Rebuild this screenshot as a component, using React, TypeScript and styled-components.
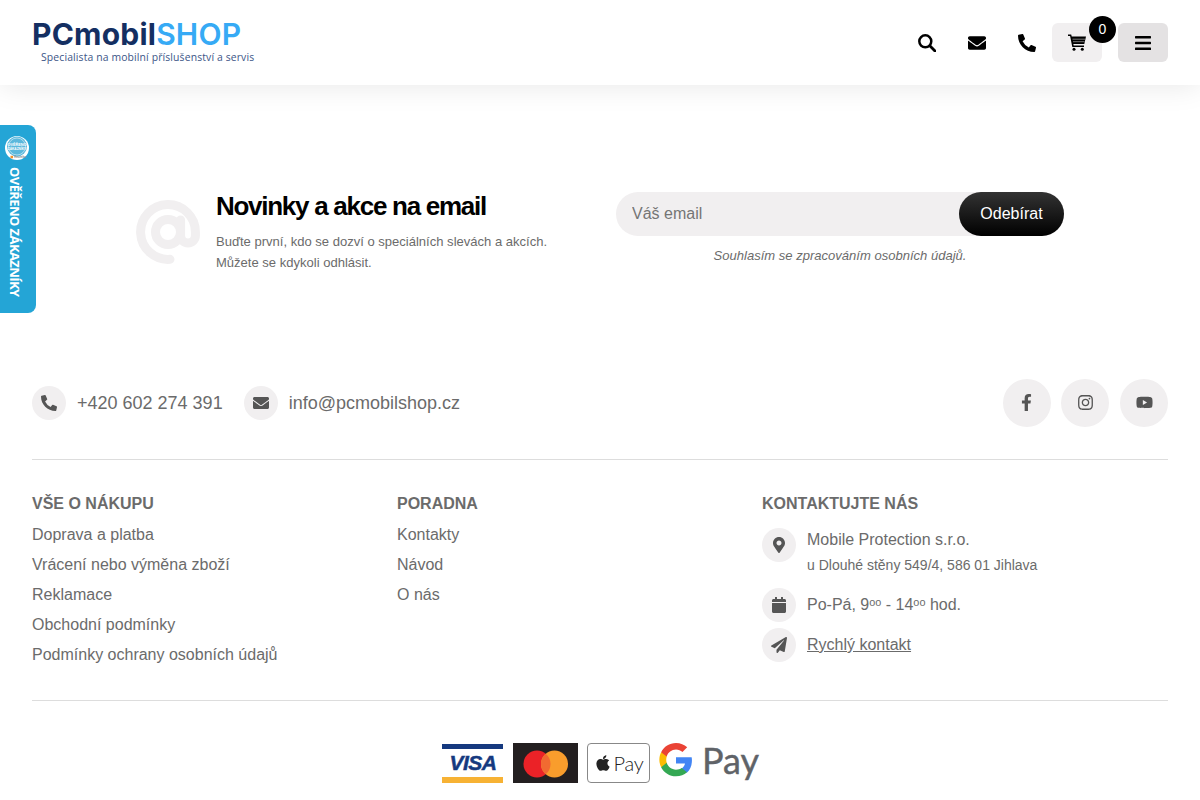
import { ReactNode } from "react";
import styled, { createGlobalStyle } from "styled-components";
import {
  FaApple,
  FaCalendar,
  FaEnvelope,
  FaFacebookF,
  FaInstagram,
  FaMapMarkerAlt,
  FaPaperPlane,
  FaPhoneAlt,
  FaYoutube,
} from "react-icons/fa";

const GlobalStyle = createGlobalStyle`
  html, body {
    margin: 0;
    padding: 0;
    background: #fff;
    overflow: hidden;
    height: 800px;
  }
  body {
    font-family: "Liberation Sans", Arial, sans-serif;
    color: #6b6b6b;
  }
`;

const shopLinks = [
  "Doprava a platba",
  "Vrácení nebo výměna zboží",
  "Reklamace",
  "Obchodní podmínky",
  "Podmínky ochrany osobních údajů",
];

const helpLinks = ["Kontakty", "Návod", "O nás"];

const App = () => {
  return (
    <Page>
      <GlobalStyle />
      <Header>
        <Logo>
          <LogoName>
            PCmobil<LogoAccent>SHOP</LogoAccent>
          </LogoName>
          <LogoTagline>Specialista na mobilní příslušenství a servis</LogoTagline>
        </Logo>
        <Toolbar>
          <ToolButton>
            <svg width="18" height="18" viewBox="0 0 18 18" fill="none" stroke="#000">
              <circle cx="7.3" cy="7.3" r="6" strokeWidth="2.5" />
              <path d="M11.8 11.8L17 17" strokeWidth="2.8" strokeLinecap="round" />
            </svg>
          </ToolButton>
          <ToolButton>
            <FaEnvelope />
          </ToolButton>
          <ToolButton>
            <FaPhoneAlt />
          </ToolButton>
          <ToolButton $bg="#f1eff0">
            <svg width="18" height="17" viewBox="0 0 18 17">
              <path d="M0 .6h3.200l.5 2H18l-1.700 7.400H5.300l.4 1.600H16V13H4.300L2.100 2H0z" fill="#000" />
              <path d="M4.500 5.200h12.500M5 7.700h11.500" stroke="#f1eff0" strokeWidth=".5" />
              <circle cx="6" cy="15.300" r="1.500" fill="#000" />
              <circle cx="14.300" cy="15.300" r="1.500" fill="#000" />
            </svg>
            <CartBadge>0</CartBadge>
          </ToolButton>
          <MenuButton $bg="#e4e2e3">
            <svg width="16" height="14" viewBox="0 0 16 14" fill="#000">
              <rect width="16" height="2.400" rx=".6" />
              <rect y="5.800" width="16" height="2.400" rx=".6" />
              <rect y="11.600" width="16" height="2.400" rx=".6" />
            </svg>
          </MenuButton>
        </Toolbar>
      </Header>

      <TrustBadge>
        <TrustSeal>
          <svg width="24" height="24" viewBox="0 0 24 24" fontFamily="Liberation Sans" fontWeight="700">
            <circle cx="12" cy="12" r="12" fill="#fff" />
            <circle cx="12" cy="10.500" r="10" fill="#5bb8dc" />
            <circle cx="12" cy="10.500" r="8.500" fill="none" stroke="#fff" strokeWidth=".5" />
            <text x="12" y="10" textAnchor="middle" fontSize="3.800" fill="#fff">
              OVĚŘENO
            </text>
            <text x="12" y="14" textAnchor="middle" fontSize="3.200" fill="#fff">
              ZÁKAZNÍKY
            </text>
            <rect x="5.500" y="19.800" width="2.500" height="2.500" fill="#f3902c" />
            <text x="9" y="22.200" fontSize="3" fill="#7f8a90">
              Heureka
            </text>
          </svg>
        </TrustSeal>
        <TrustLabel>OVĚŘENO ZÁKAZNÍKY</TrustLabel>
      </TrustBadge>

      <Newsletter>
        <NewsletterInfo>
          <AtIcon width="64" height="64" viewBox="0 0 64 64" fill="none" stroke="#f1eff0" strokeWidth="9" strokeLinecap="round">
            <circle cx="32" cy="32" r="12.500" />
            <path d="M34 59.300A27.400 27.400 0 1 1 59.400 32v3.500a7.400 7.400 0 0 1-14.800 0V20" />
          </AtIcon>
          <div>
            <NewsletterTitle>Novinky a akce na email</NewsletterTitle>
            <NewsletterText>
              Buďte první, kdo se dozví o speciálních slevách a akcích.
              <br />
              Můžete se kdykoli odhlásit.
            </NewsletterText>
          </div>
        </NewsletterInfo>
        <NewsletterForm>
          <EmailField>
            <EmailInput placeholder="Váš email" />
            <SubscribeButton>Odebírat</SubscribeButton>
          </EmailField>
          <Consent>Souhlasím se zpracováním osobních údajů.</Consent>
        </NewsletterForm>
      </Newsletter>

      <Footer>
        <ContactBar>
          <ContactList>
            <ContactItem>
              <Round>
                <FaPhoneAlt />
              </Round>
              <ContactText>+420 602 274 391</ContactText>
            </ContactItem>
            <ContactItem>
              <Round>
                <FaEnvelope />
              </Round>
              <ContactText>info@pcmobilshop.cz</ContactText>
            </ContactItem>
          </ContactList>
          <Socials>
            <SocialLink>
              <FaFacebookF />
            </SocialLink>
            <SocialLink>
              <FaInstagram />
            </SocialLink>
            <SocialLink>
              <FaYoutube />
            </SocialLink>
          </Socials>
        </ContactBar>

        <Columns>
          <LinkColumn title="VŠE O NÁKUPU" links={shopLinks} />
          <LinkColumn title="PORADNA" links={helpLinks} />
          <div>
            <ColumnTitle>KONTAKTUJTE NÁS</ColumnTitle>
            <AddressRow>
              <Round>
                <FaMapMarkerAlt />
              </Round>
              <div>
                <AddressName>Mobile Protection s.r.o.</AddressName>
                <AddressLine>u Dlouhé stěny 549/4, 586 01 Jihlava</AddressLine>
              </div>
            </AddressRow>
            <InfoRow>
              <Round>
                <FaCalendar />
              </Round>
              <span>Po-Pá, 9ᵒᵒ - 14ᵒᵒ hod.</span>
            </InfoRow>
            <InfoRow>
              <Round>
                <FaPaperPlane />
              </Round>
              <QuickLink>Rychlý kontakt</QuickLink>
            </InfoRow>
          </div>
        </Columns>

        <Payments>
          <svg width="61" height="40" viewBox="0 0 61 40">
            <rect y="1" width="61" height="5" fill="#15397f" />
            <rect y="34" width="61" height="6" fill="#f7b234" />
            <text
              x="31"
              y="27"
              textAnchor="middle"
              fontFamily="Liberation Sans"
              fontSize="21"
              fontWeight="700"
              fontStyle="italic"
              letterSpacing="-.5"
              fill="#15397f"
              stroke="#15397f"
              strokeWidth=".5"
            >
              VISA
            </text>
          </svg>
          <svg width="65" height="40" viewBox="0 0 65 40">
            <rect width="65" height="40" fill="#231f20" />
            <circle cx="24" cy="21" r="13.500" fill="#eb2227" />
            <circle cx="41.500" cy="21" r="13.500" fill="#f99d2c" />
            <path d="M32.750 10.700a13.500 13.500 0 0 1 0 20.600a13.500 13.500 0 0 1 0-20.600z" fill="#f16a31" />
          </svg>
          <ApplePay>
            <FaApple />
            <ApplePayLabel>Pay</ApplePayLabel>
          </ApplePay>
          <GooglePay>
            <svg width="34" height="34" viewBox="0 0 48 48">
              <path fill="#4285f4" d="M46.500 24.500c0-1.600-.14-3.100-.4-4.500H24v8.800h12.700c-.55 2.900-2.200 5.400-4.700 7.100v5.900h7.600c4.400-4.100 6.900-10.100 6.900-17.300z" />
              <path fill="#34a853" d="M24 47c6.300 0 11.600-2.100 15.500-5.700L32 35.400c-2.100 1.400-4.800 2.300-8 2.300-6.100 0-11.300-4.100-13.100-9.700H3v6.100C6.900 41.800 14.800 47 24 47z" />
              <path fill="#fbbc04" d="M10.900 28c-.5-1.400-.7-2.900-.7-4.500s.3-3.100.7-4.500v-6.100H3C1.400 16.100.5 19.700.5 23.500S1.400 30.900 3 34.100l7.900-6.100z" />
              <path fill="#ea4335" d="M24 9.300c3.500 0 6.600 1.200 9.100 3.500l6.700-6.700C35.600 2.300 30.300 0 24 0 14.800 0 6.900 5.200 3 12.900l7.900 6.100C12.700 13.400 17.900 9.300 24 9.300z" />
            </svg>
            <GooglePayLabel>Pay</GooglePayLabel>
          </GooglePay>
        </Payments>
      </Footer>
    </Page>
  );
};

const LinkColumn = ({ title, links }: { title: ReactNode; links: string[] }) => (
  <div>
    <ColumnTitle>{title}</ColumnTitle>
    {links.map((link) => (
      <FooterLink key={link}>{link}</FooterLink>
    ))}
  </div>
);

export default App;

const Page = styled.div`
  position: relative;
  width: 1200px;
`;

const Header = styled.header`
  height: 85px;
  padding: 0 32px;
  box-sizing: border-box;
  display: flex;
  align-items: center;
  justify-content: space-between;
  background: #fff;
  box-shadow: 0 0 30px rgba(0, 0, 0, 0.1);
`;

const Logo = styled.div`
  display: flex;
  flex-direction: column;
  margin-top: -3px;
`;

const LogoName = styled.div`
  font-family: Inter, sans-serif;
  font-size: 30px;
  line-height: 30px;
  font-weight: 700;
  letter-spacing: 0.22px;
  color: #142f62;
`;

const LogoAccent = styled.span`
  font-weight: 600;
  color: #36aaf5;
`;

const LogoTagline = styled.div`
  font-family: "Open Sans", sans-serif;
  font-size: 10.4px;
  line-height: 14px;
  margin-top: 1px;
  margin-left: 9px;
  letter-spacing: 0.13px;
  color: #3c5587;
`;

const Toolbar = styled.div`
  display: flex;
  align-items: center;
`;

const ToolButton = styled.div<{ $bg?: string }>`
  position: relative;
  width: 50px;
  height: 39px;
  display: flex;
  align-items: center;
  justify-content: center;
  border-radius: 6px;
  font-size: 18px;
  color: #000;
  background: ${({ $bg }) => $bg || "transparent"};
`;

const MenuButton = styled(ToolButton)`
  margin-left: 16px;
`;

const CartBadge = styled.span`
  position: absolute;
  top: -7px;
  right: -14px;
  width: 27px;
  height: 27px;
  border-radius: 50%;
  background: #000;
  color: #fff;
  font-size: 14px;
  line-height: 27px;
  text-align: center;
`;

const TrustBadge = styled.div`
  position: absolute;
  left: 0;
  top: 125px;
  width: 36px;
  height: 188px;
  display: flex;
  flex-direction: column;
  align-items: flex-start;
  padding-left: 5px;
  box-sizing: border-box;
  background: #24a5d6;
  border-radius: 0 8px 8px 0;
`;

const TrustSeal = styled.div`
  height: 24px;
  margin-top: 11px;
`;

const TrustLabel = styled.div`
  writing-mode: vertical-rl;
  margin-top: 7px;
  margin-left: 1px;
  font-family: "Open Sans", sans-serif;
  font-size: 13px;
  line-height: 18px;
  font-weight: 700;
  letter-spacing: -0.58px;
  color: #fff;
  white-space: nowrap;
`;

const Newsletter = styled.section`
  display: grid;
  grid-template-columns: 480px 448px;
  justify-content: center;
  height: 255px;
  padding-top: 107px;
  box-sizing: border-box;
`;

const NewsletterInfo = styled.div`
  display: flex;
  align-items: center;
  gap: 16px;
  height: 80px;
`;

const AtIcon = styled.svg`
  flex: none;
`;

const NewsletterTitle = styled.h2`
  margin: 0 0 10px;
  font-size: 26px;
  line-height: 30px;
  font-weight: 700;
  letter-spacing: -1.27px;
  color: #000;
`;

const NewsletterText = styled.p`
  margin: 0;
  font-size: 13.04px;
  line-height: 21px;
`;

const NewsletterForm = styled.div`
  display: flex;
  flex-direction: column;
`;

const EmailField = styled.div`
  display: flex;
  height: 44px;
  border-radius: 22px;
  background: #f1eff0;
`;

const EmailInput = styled.input`
  flex: 1;
  min-width: 0;
  border: 0;
  outline: 0;
  background: none;
  padding: 0 16px;
  font-family: inherit;
  font-size: 16px;
  color: #6b6b6b;

  &::placeholder {
    color: #757575;
    opacity: 1;
  }
`;

const SubscribeButton = styled.button`
  width: 105px;
  border: 0;
  border-radius: 22px;
  background: linear-gradient(#333, #000);
  color: #fff;
  font-family: inherit;
  font-size: 16px;
`;

const Consent = styled.p`
  margin: 11px 0 0;
  font-size: 13.04px;
  line-height: 17px;
  font-style: italic;
  text-align: center;
`;

const Footer = styled.footer`
  padding: 0 32px;
`;

const ContactBar = styled.div`
  display: flex;
  align-items: center;
  justify-content: space-between;
  height: 120px;
  padding-top: 6px;
  box-sizing: border-box;
  border-bottom: 1px solid #ddd;
`;

const ContactList = styled.div`
  display: flex;
  gap: 21px;
`;

const ContactItem = styled.div`
  display: flex;
  align-items: center;
  gap: 11px;
  font-size: 18px;
`;

const ContactText = styled.span`
  margin-top: 2px;
`;

const Round = styled.span`
  flex: none;
  width: 34px;
  height: 34px;
  display: flex;
  align-items: center;
  justify-content: center;
  border-radius: 50%;
  background: #f1eff0;
  color: #555;
  font-size: 16px;
`;

const Socials = styled.div`
  display: flex;
  gap: 10.6px;
`;

const SocialLink = styled.a`
  width: 48px;
  height: 48px;
  display: flex;
  align-items: center;
  justify-content: center;
  border-radius: 50%;
  background: #f1eff0;
  color: #555;
  font-size: 17px;
`;

const Columns = styled.div`
  display: grid;
  grid-template-columns: 365px 365px 1fr;
  height: 241px;
  padding-top: 34px;
  box-sizing: border-box;
  border-bottom: 1px solid #ddd;
`;

const ColumnTitle = styled.div`
  font-size: 16px;
  line-height: 20px;
  font-weight: 700;
  margin-bottom: 6px;
`;

const FooterLink = styled.div`
  font-size: 16px;
  line-height: 30px;
`;

const AddressRow = styled.div`
  display: flex;
  gap: 11px;
  margin-top: 14px;
  margin-bottom: 10px;
`;

const AddressName = styled.div`
  font-size: 16px;
  line-height: 24px;
`;

const AddressLine = styled.div`
  font-size: 14px;
  line-height: 26px;
`;

const InfoRow = styled.div`
  display: flex;
  align-items: center;
  gap: 11px;
  margin-bottom: 6px;
  font-size: 16px;
`;

const QuickLink = styled.a`
  color: inherit;
  text-decoration: underline;
`;

const Payments = styled.div`
  display: flex;
  justify-content: center;
  align-items: flex-start;
  gap: 10px;
  padding-top: 42px;
  padding-left: 1px;
  height: 40px;
`;

const ApplePay = styled.div`
  width: 63px;
  height: 40px;
  margin-left: -1px;
  box-sizing: border-box;
  display: flex;
  align-items: center;
  justify-content: center;
  gap: 2px;
  border: 1px solid #888;
  border-radius: 4px;
  font-size: 18px;
  color: #222;
`;

const ApplePayLabel = styled.span`
  font-family: Lato, sans-serif;
  font-size: 20px;
  font-weight: 300;
  letter-spacing: -0.3px;
`;

const GooglePay = styled.div`
  display: flex;
  align-items: flex-start;
  gap: 9px;
  margin-left: -1px;
`;

const GooglePayLabel = styled.span`
  width: 57px;
  font-family: Lato, sans-serif;
  font-size: 36px;
  line-height: 34px;
  color: #5f6368;
  -webkit-text-stroke: 0.4px #5f6368;
`;
